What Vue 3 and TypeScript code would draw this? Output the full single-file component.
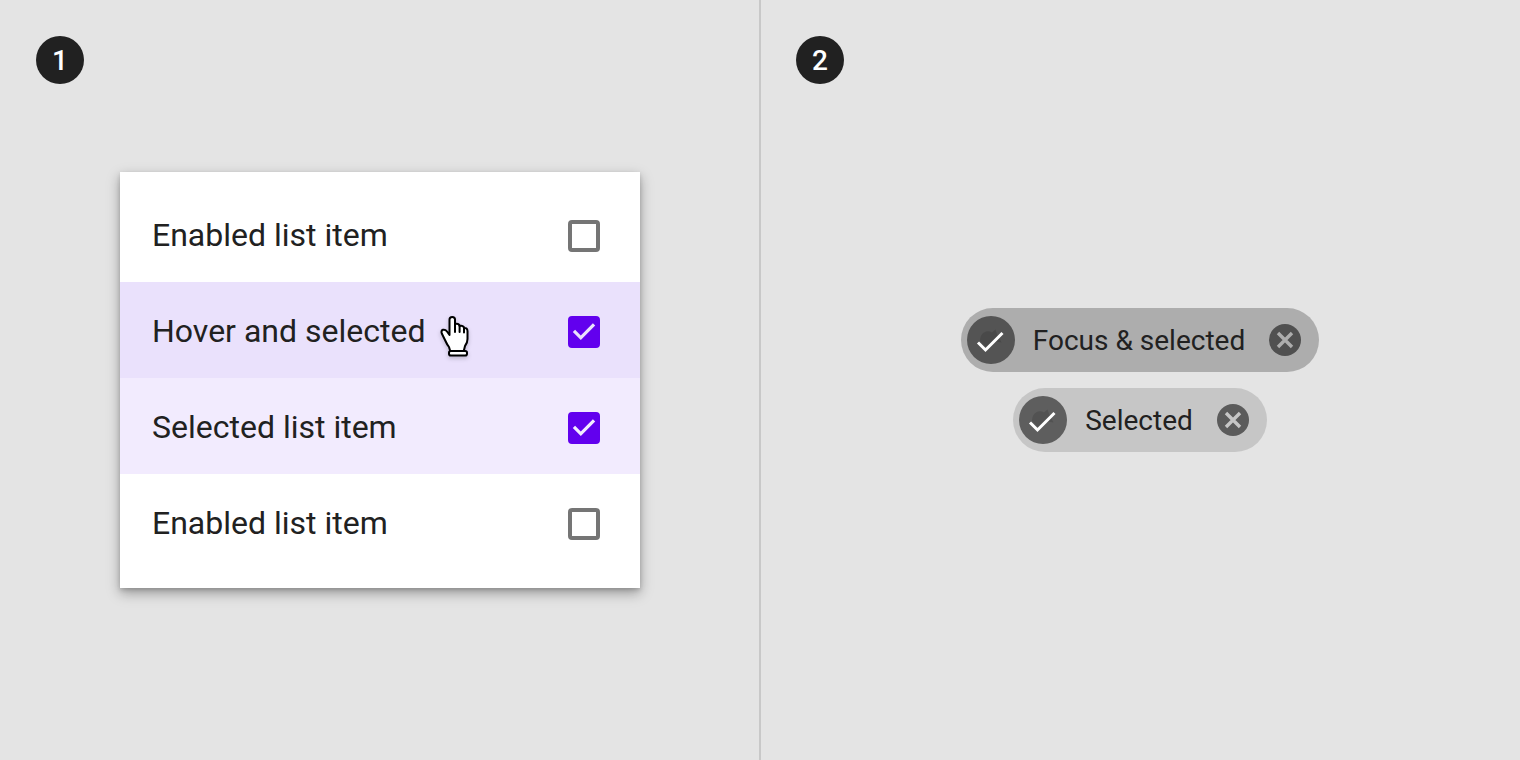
<script setup lang="ts">
import { ref } from 'vue'

interface ListItem {
  id: string
  label: string
  selected: boolean
  hovered: boolean
}

interface Chip {
  id: string
  label: string
  focused: boolean
}

const items = ref<ListItem[]>([
  { id: 'item-1', label: 'Enabled list item', selected: false, hovered: false },
  { id: 'item-2', label: 'Hover and selected', selected: true, hovered: true },
  { id: 'item-3', label: 'Selected list item', selected: true, hovered: false },
  { id: 'item-4', label: 'Enabled list item', selected: false, hovered: false },
])

const chips = ref<Chip[]>([
  { id: 'chip-1', label: 'Focus & selected', focused: true },
  { id: 'chip-2', label: 'Selected', focused: false },
])

function removeChip(id: string): void {
  chips.value = chips.value.filter((chip) => chip.id !== id)
}
</script>

<template>
  <main class="board">
    <section class="panel">
      <span class="badge">1</span>
      <ul class="card">
        <li
          v-for="item in items"
          :key="item.id"
          class="row"
          :class="{ selected: item.selected, hovered: item.hovered }"
        >
          <label class="row-label" :for="item.id">{{ item.label }}</label>
          <span class="box">
            <input :id="item.id" v-model="item.selected" class="box-input" type="checkbox" />
            <svg v-if="item.selected" class="box-mark" viewBox="0 0 32 32" aria-hidden="true">
              <path d="M12.8 24 L4.8 16 L7.1 13.7 L12.8 19.4 L24.9 7.2 L27.2 9.6 Z" />
            </svg>
          </span>
          <svg v-if="item.hovered" class="cursor" viewBox="0 0 32 44" aria-hidden="true">
            <path
              class="hand"
              d="M9.5 21 V5.5 Q9.5 3 12.2 3 Q15 3 15 5.5 V10 Q19 9.3 19.6 12 Q23.6 11.2 24 14 Q27.3 13.6 27.5 17 V25 Q27.5 29 25 32 L23.5 38 H10.5 L9 33 Q7 30.5 5.5 27 L1.8 19.5 Q0.8 16.6 2.9 15.8 Q5.3 15.2 7 17.5 Z"
            />
            <path class="fingers" d="M15 9 V18 M19.6 11.5 V18 M24 13.5 V18.5" />
            <rect class="hand" x="9" y="37" width="18" height="4.5" rx="1.8" />
          </svg>
        </li>
      </ul>
    </section>

    <section class="panel">
      <span class="badge">2</span>
      <div class="chips">
        <div v-for="chip in chips" :key="chip.id" class="chip" :class="{ focused: chip.focused }">
          <svg class="avatar" viewBox="0 0 48 48" aria-hidden="true">
            <circle class="disc" cx="24" cy="24" r="24" />
            <path
              class="shade"
              d="M13 25 Q13 19 17 16.5 Q21 14 25 16.5 L28.5 13.5 L30 18 L34.5 26.5 L26 25 L19 31 Z"
            />
            <path class="tick" d="M11 26.5 L18.5 34 L35.5 17" />
          </svg>
          <span class="chip-label">{{ chip.label }}</span>
          <button class="remove" type="button" :aria-label="`Remove ${chip.label}`" @click="removeChip(chip.id)">
            <svg viewBox="0 0 32 32" aria-hidden="true">
              <path d="M9 9 L23 23 M23 9 L9 23" />
            </svg>
          </button>
        </div>
      </div>
    </section>
  </main>
</template>

<style>
body {
  margin: 0;
  background: #e4e4e4;
}
</style>

<style scoped>
.board {
  display: grid;
  grid-template-columns: 1fr 1fr;
  min-height: 100vh;
  background: #e4e4e4;
  color: #212121;
  font-family: Roboto, 'Liberation Sans', sans-serif;
}

.panel {
  display: grid;
  grid-template-areas: 'stage';
  box-sizing: border-box;
  padding: 36px;
}

.panel:first-child {
  box-shadow: 1px 0 0 #c8c8c8, inset -1px 0 0 #c8c8c8;
}

.badge {
  grid-area: stage;
  place-self: start;
  width: 48px;
  height: 48px;
  border-radius: 50%;
  background: #212121;
  color: #fff;
  font-size: 28px;
  font-weight: 500;
  line-height: 50px;
  text-align: center;
}

.card {
  grid-area: stage;
  place-self: center;
  box-sizing: border-box;
  width: 520px;
  max-width: 100%;
  margin: 0;
  padding: 14px 0 18px;
  background: #fff;
  box-shadow: 0 2px 4px rgba(0, 0, 0, 0.14), 0 5px 12px rgba(0, 0, 0, 0.34);
  list-style: none;
}

.row {
  position: relative;
  display: flex;
  align-items: center;
  justify-content: space-between;
  box-sizing: border-box;
  height: 96px;
  padding: 4px 40px 0 32px;
}

.row.selected {
  background: #f2ebfe;
}

.row.hovered {
  background: #eae1fc;
}

.row-label {
  padding-bottom: 2px;
  font-size: 32px;
  line-height: 40px;
}

.box {
  display: grid;
  width: 32px;
  height: 32px;
}

.box-input {
  grid-area: 1 / 1;
  appearance: none;
  box-sizing: border-box;
  width: 32px;
  height: 32px;
  margin: 0;
  border: 4px solid #757575;
  border-radius: 4px;
}

.box-input:checked {
  border-color: #6200ee;
  background: #6200ee;
}

.box-mark {
  grid-area: 1 / 1;
  width: 32px;
  height: 32px;
  fill: #f2ebfe;
  pointer-events: none;
}

.hovered .box-mark {
  fill: #eae1fc;
}

.cursor {
  position: absolute;
  top: 32px;
  left: 320px;
  width: 32px;
  height: 44px;
  overflow: visible;
  filter: drop-shadow(0 2px 2px rgba(0, 0, 0, 0.2));
  pointer-events: none;
}

.hand {
  fill: #fff;
  stroke: #000;
  stroke-width: 2;
  stroke-linejoin: round;
}

.fingers {
  fill: none;
  stroke: #000;
  stroke-width: 2;
  stroke-linecap: round;
}

.chips {
  grid-area: stage;
  place-self: center;
  display: flex;
  flex-direction: column;
  align-items: center;
  gap: 16px;
}

.chip {
  display: flex;
  align-items: center;
  box-sizing: border-box;
  height: 64px;
  padding: 0 18px 0 6px;
  border-radius: 32px;
  background: #c6c6c6;
}

.chip.focused {
  background: #adadad;
}

.avatar {
  width: 48px;
  height: 48px;
}

.disc {
  fill: #5e5e5e;
}

.shade {
  fill: #525252;
}

.focused .disc {
  fill: #545454;
}

.focused .shade {
  fill: #494949;
}

.tick {
  fill: none;
  stroke: #fff;
  stroke-width: 3;
}

.chip-label {
  padding: 2px 24px 0 18px;
  font-size: 28px;
  line-height: 40px;
}

.remove {
  width: 32px;
  height: 32px;
  padding: 0;
  border: 0;
  border-radius: 50%;
  background: #5b5b5b;
}

.focused .remove {
  background: #505050;
}

.remove svg {
  display: block;
  width: 32px;
  height: 32px;
  fill: none;
  stroke: #c6c6c6;
  stroke-width: 3.4;
}

.focused .remove svg {
  stroke: #adadad;
}
</style>
